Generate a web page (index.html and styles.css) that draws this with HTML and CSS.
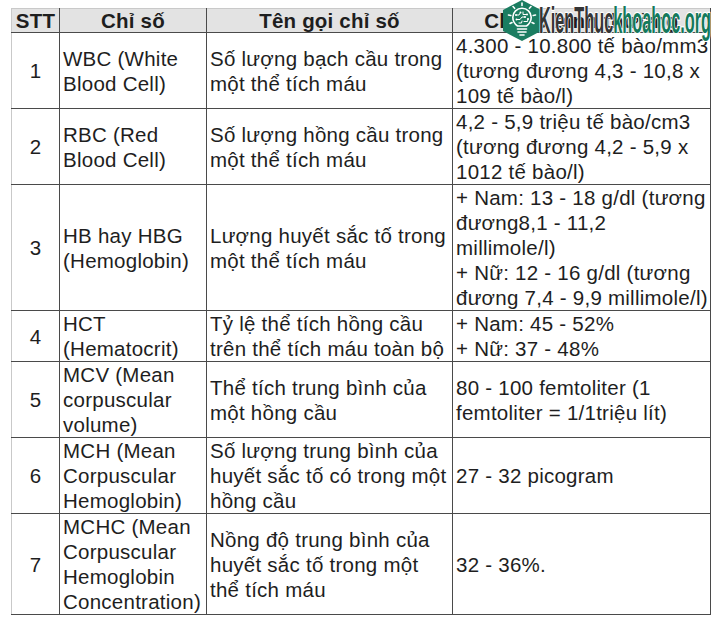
FILE: index.html
```html
<!DOCTYPE html>
<html lang="vi">
<head>
<meta charset="utf-8">
<title>Chỉ số xét nghiệm máu</title>
<link rel="stylesheet" href="styles.css">
</head>
<body>
<table class="tbl">
  <colgroup>
    <col class="c1"><col class="c2"><col class="c3"><col class="c4">
  </colgroup>
  <thead>
    <tr>
      <th>STT</th>
      <th>Chỉ số</th>
      <th>Tên gọi chỉ số</th>
      <th>Chỉ số bình thường</th>
    </tr>
  </thead>
  <tbody>
    <tr>
      <td class="num">1</td>
      <td>WBC (White Blood Cell)</td>
      <td>Số lượng bạch cầu trong một thể tích máu</td>
      <td>4.300 - 10.800 tế bào/mm3 (tương đương 4,3 - 10,8 x 109 tế bào/l)</td>
    </tr>
    <tr>
      <td class="num">2</td>
      <td>RBC (Red Blood Cell)</td>
      <td>Số lượng hồng cầu trong một thể tích máu</td>
      <td>4,2 - 5,9 triệu tế bào/cm3 (tương đương 4,2 - 5,9 x 1012 tế bào/l)</td>
    </tr>
    <tr>
      <td class="num">3</td>
      <td>HB hay HBG (Hemoglobin)</td>
      <td>Lượng huyết sắc tố trong một thể tích máu</td>
      <td>+ Nam: 13 - 18 g/dl (tương đương8,1 - 11,2<br>millimole/l)<br>+ Nữ: 12 - 16 g/dl (tương đương 7,4 - 9,9 millimole/l)</td>
    </tr>
    <tr>
      <td class="num">4</td>
      <td>HCT (Hematocrit)</td>
      <td>Tỷ lệ thể tích hồng cầu trên thể tích máu toàn bộ</td>
      <td>+ Nam: 45 - 52%<br>+ Nữ: 37 - 48%</td>
    </tr>
    <tr>
      <td class="num">5</td>
      <td>MCV (Mean corpuscular volume)</td>
      <td>Thể tích trung bình của một hồng cầu</td>
      <td>80 - 100 femtoliter (1 femtoliter = 1/1triệu lít)</td>
    </tr>
    <tr>
      <td class="num">6</td>
      <td>MCH (Mean Corpuscular Hemoglobin)</td>
      <td>Số lượng trung bình của huyết sắc tố có trong một hồng cầu</td>
      <td>27 - 32 picogram</td>
    </tr>
    <tr>
      <td class="num">7</td>
      <td>MCHC (Mean Corpuscular Hemoglobin Concentration)</td>
      <td>Nồng độ trung bình của huyết sắc tố trong một thể tích máu</td>
      <td>32 - 36%.</td>
    </tr>
  </tbody>
</table>

<div class="wm">
  <svg class="wm-logo" width="40" height="42" viewBox="0 0 40 42" aria-hidden="true">
    <polygon points="20,0 39,10 39,31 20,41 1,31 1,10" fill="#1b7d61"/>
    <g stroke="#fff" stroke-width="1.6" stroke-linecap="round" fill="none">
      <line x1="20" y1="3" x2="20" y2="5.5"/>
      <line x1="11" y1="6.5" x2="12.6" y2="8.3"/>
      <line x1="29" y1="6.5" x2="27.4" y2="8.3"/>
      <line x1="6.5" y1="15" x2="8.8" y2="15.5"/>
      <line x1="33.5" y1="15" x2="31.2" y2="15.5"/>
      <line x1="8" y1="23.5" x2="10" y2="22.5"/>
      <line x1="32" y1="23.5" x2="30" y2="22.5"/>
      <path d="M15.5 26 C12 23.5 10.8 20.5 10.8 17.3 C10.8 12.2 15 8.3 20 8.3 C25 8.3 29.2 12.2 29.2 17.3 C29.2 20.5 28 23.5 24.5 26 Z"/>
      <line x1="15.5" y1="29" x2="24.5" y2="29"/>
      <line x1="16" y1="32" x2="24" y2="32"/>
      <line x1="18" y1="35" x2="22" y2="35"/>
    </g>
    <g stroke="#fff" stroke-width="1" fill="none" stroke-linecap="round">
      <path d="M14 15 L17 15 L18.5 12.5"/>
      <path d="M14.5 19.5 L18 19.5 L20 17 L23 17"/>
      <path d="M21 12 L21 14.5 L25 14.5"/>
      <path d="M22 21.5 L25.5 21.5 L26 19"/>
      <path d="M17 23 L19.5 23 L20 21"/>
    </g>
    <g fill="#fff">
      <circle cx="18.5" cy="12.5" r="1"/>
      <circle cx="23" cy="17" r="1"/>
      <circle cx="25" cy="14.5" r="1"/>
      <circle cx="26" cy="19" r="1"/>
      <circle cx="14" cy="15" r="1"/>
      <circle cx="14.5" cy="19.5" r="1"/>
    </g>
  </svg>
  <svg class="wm-word" width="176" height="42" viewBox="0 0 176 42">
    <text class="wm-text" x="1" y="33" textLength="172" lengthAdjust="spacingAndGlyphs"><tspan class="wm-dark">KienThuc</tspan><tspan class="wm-green">khoahoc.org</tspan></text>
  </svg>
</div>
</body>
</html>
```

FILE: styles.css
```css
html, body {
  margin: 0;
  padding: 0;
  background: #ffffff;
}

body {
  padding: 8px 0 0 11px;
  font-family: "Liberation Sans", Arial, sans-serif;
  color: #1e1e1e;
}

.tbl {
  border-collapse: collapse;
  table-layout: fixed;
  width: 699px;
  font-size: 20.5px;
  letter-spacing: 0.25px;
  line-height: 25px;
  border-top: 1px solid #c9c9c9;
  border-left: 1px solid #c9c9c9;
}

.c1 { width: 48px; }
.c2 { width: 147px; }
.c3 { width: 246px; }
.c4 { width: 258px; }

.tbl th {
  background: #e3e3e3;
  font-weight: bold;
  text-align: center;
  height: 23px;
  line-height: 23px;
  padding: 0;
  border: 1px solid #4a4a4a;
  border-top-color: #c9c9c9;
  letter-spacing: 0.2px;
}

.tbl th:first-child {
  border-left-color: #c9c9c9;
}

.tbl td {
  text-align: left;
  vertical-align: middle;
  padding: 0 0 0 3px;
  border: 1px solid #4a4a4a;
}

.tbl td:first-child {
  border-left-color: #c9c9c9;
}

.tbl td.num {
  text-align: center;
  padding: 0;
}

.wm {
  position: absolute;
  top: 0;
  left: 502px;
  height: 42px;
  display: flex;
  align-items: flex-start;
}

.wm-logo {
  display: block;
  flex: none;
}

.wm-word {
  display: block;
  flex: none;
  margin-left: -4px;
}

.wm-text {
  font-family: "Liberation Sans", Arial, sans-serif;
  font-weight: bold;
  font-size: 36px;
  letter-spacing: 0;
  paint-order: stroke fill;
  stroke: #ffffff;
  stroke-width: 2.4px;
  stroke-linejoin: round;
}

.wm-dark {
  fill: #353535;
}

.wm-green {
  fill: #14795b;
}
```
